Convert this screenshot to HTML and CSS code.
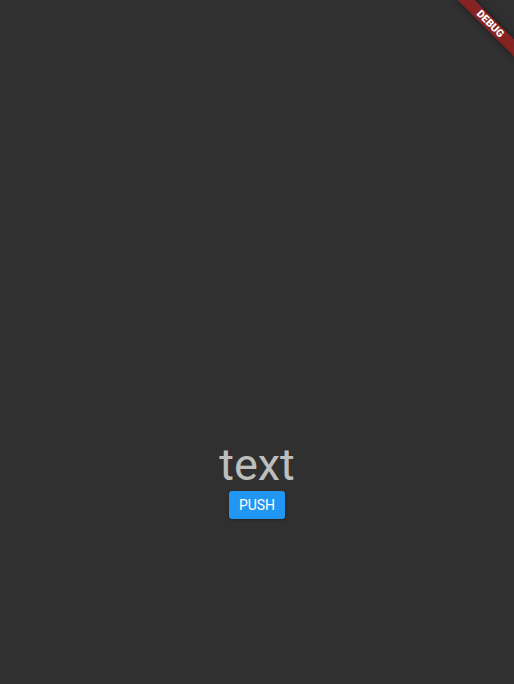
FILE: index.html
```html
<!DOCTYPE html>
<html>
<head>
<meta charset="utf-8">
<link rel="stylesheet" href="styles.css">
</head>
<body>
<main class="screen">
  <div class="content">
    <div class="headline">text</div>
    <button class="push">PUSH</button>
  </div>
  <div class="banner">DEBUG</div>
</main>
</body>
</html>
```
FILE: styles.css
```css
html, body {
  margin: 0;
  padding: 0;
  width: 514px;
  height: 684px;
  overflow: hidden;
  background: #303030;
}
.screen {
  position: relative;
  width: 514px;
  height: 684px;
  overflow: hidden;
  font-family: Roboto, "Liberation Sans", sans-serif;
}
.content {
  display: flex;
  flex-direction: column;
  align-items: center;
  padding-top: 438px;
}
.headline {
  font-size: 45px;
  line-height: 53px;
  color: rgba(255, 255, 255, 0.7);
  font-weight: 400;
}
.push {
  width: 56px;
  height: 28px;
  margin: 0;
  padding: 0;
  border: none;
  border-radius: 3px;
  background: #2196F3;
  color: #fff;
  font-family: Roboto, "Liberation Sans", sans-serif;
  font-size: 14px;
  font-weight: 400;
  line-height: 28px;
  box-shadow: 0 1px 3px rgba(0, 0, 0, 0.3);
}
.banner {
  position: absolute;
  left: 450px;
  top: 18px;
  width: 80px;
  height: 12px;
  background: rgba(183, 28, 28, 0.63);
  box-shadow: 0 0 6px rgba(0, 0, 0, 0.5);
  color: #fff;
  font-size: 10.5px;
  font-weight: 900;
  line-height: 12px;
  text-align: center;
  transform: rotate(45deg);
}
```
